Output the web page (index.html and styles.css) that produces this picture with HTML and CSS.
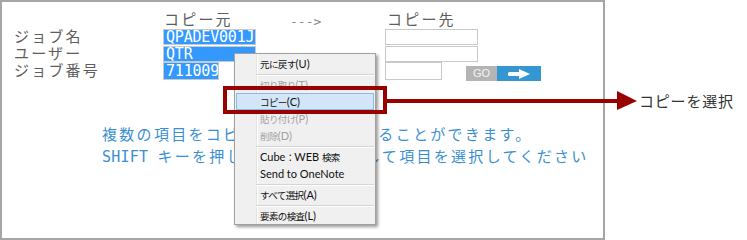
FILE: index.html
```html
<!DOCTYPE html>
<html lang="ja">
<head>
  <meta charset="UTF-8" />
  <title>ジョブのコピー</title>
  <link rel="stylesheet" href="styles.css">
</head>
<body>
<div class="page">
  <div class="screen">
    <div class="form">
      <span></span>
      <span class="head head-src">コピー元</span>
      <span class="head head-arrow">---&gt;</span>
      <span class="head head-dst">コピー先</span>
      <span></span>

      <span class="lbl">ジョブ名</span>
      <span><span class="field sel w10">QPADEV001J</span></span>
      <span></span>
      <span><span class="field w10"></span></span>
      <span></span>

      <span class="lbl">ユーザー</span>
      <span><span class="field sel w10">QTR</span></span>
      <span></span>
      <span><span class="field w10"></span></span>
      <span></span>

      <span class="lbl">ジョブ番号</span>
      <span><span class="field sel tall w6">711009</span></span>
      <span></span>
      <span><span class="field tall w6d"></span></span>
      <span class="go-btn">
        <span class="go-label">GO</span>
        <span class="go-arrow">
          <svg width="22" height="10" viewBox="0 0 22 10"><rect x="0" y="3" width="13" height="4" rx="1.5" fill="#fff"/><polygon points="11,0 22,5 11,10" fill="#fff"/></svg>
        </span>
      </span>
    </div>
    <p class="msg">
      複数の項目をコピーして一括登録することができます。<br>
      <span class="ascii">SHIFT </span>キーを押しながらクリックして項目を選択してください
    </p>
  </div>
  <div class="note">コピーを選択</div>
</div>

<!-- context menu -->
<div class="ctx-menu">
  <div class="item"><span class="jp">元に戻す</span>(U)</div>
  <div class="sep"></div>
  <div class="item off"><span class="jp">切り取り</span>(T)</div>
  <div class="item hot"><span class="jp">コピー</span>(C)</div>
  <div class="item off"><span class="jp">貼り付け</span>(P)</div>
  <div class="item off"><span class="jp">削除</span>(D)</div>
  <div class="sep"></div>
  <div class="item">Cube<span class="jp">：</span>WEB <span class="jp">検索</span></div>
  <div class="item">Send to OneNote</div>
  <div class="sep"></div>
  <div class="item"><span class="jp">すべて選択</span>(A)</div>
  <div class="sep"></div>
  <div class="item"><span class="jp">要素の検査</span>(L)</div>
</div>

<!-- callout -->
<div class="callout"></div>
<svg class="pointer" width="252" height="22" viewBox="0 0 252 22">
  <rect x="0" y="9" width="232" height="4" fill="#990000"/>
  <polygon points="230,1 250,11 230,20" fill="#990000"/>
</svg>
</body>
</html>
```

FILE: styles.css
```css
body {
  margin: 0;
  background-color: #fff;
  font-family: "DejaVu Sans Mono", "Noto Sans CJK JP", monospace;
}
.page {
  display: flex;
  align-items: flex-start;
}
.screen {
  box-sizing: border-box;
  width: 605px;
  height: 240px;
  border: 2px solid #a6a6a6;
  flex-shrink: 0;
}
.form {
  display: grid;
  grid-template-columns: 149px 127px 95px 81px 80px;
  grid-template-rows: 17px 17px 16px 18px;
  padding: 10px 0 0 12px;
  color: #5e5e5e;
  font-size: 15px;
}
.head, .lbl {
  line-height: 17px;
  letter-spacing: 2.2px;
  white-space: nowrap;
}
.lbl {
  align-self: center;
}
.head-src {
  padding-left: 1px;
}
.head-dst {
  padding-left: 2px;
}
.head-arrow {
  font-size: 13px;
  letter-spacing: 0;
  color: #8a8a8a;
  padding-top: 1px;
}
.field {
  display: block;
  box-sizing: border-box;
  height: 16px;
  border: 1px solid #c9c9c9;
  background-color: #fff;
  font-size: 15px;
  line-height: 14px;
  letter-spacing: -0.2px;
  padding-left: 2px;
  white-space: nowrap;
  overflow: hidden;
}
.field.sel {
  background-color: #3399ff;
  color: #fff;
}
.field.tall {
  height: 18px;
  line-height: 16px;
}
.w10 { width: 93px; }
.w6 { width: 56px; }
.w6d { width: 57px; }
.go-btn {
  display: flex;
  height: 15px;
  margin-top: 4px;
}
.go-label {
  width: 31px;
  background-color: #b4b4b4;
  color: #f4f4f4;
  font-family: "Liberation Sans", sans-serif;
  font-size: 11px;
  line-height: 15px;
  text-align: center;
}
.go-arrow {
  width: 44px;
  background-color: #3497d3;
  display: flex;
  align-items: center;
  justify-content: center;
}
.msg {
  margin: 44px 0 0 100px;
  color: #3a8fd2;
  font-size: 15px;
  line-height: 22px;
  letter-spacing: 2.3px;
  white-space: nowrap;
}
.msg .ascii {
  letter-spacing: 0.2px;
}
.note {
  padding: 92px 0 0 34px;
  font-family: "Noto Sans CJK JP", sans-serif;
  font-size: 15px;
  line-height: 18px;
  letter-spacing: 0.8px;
  color: #333;
  white-space: nowrap;
}
/* Context menu */
.ctx-menu {
  position: absolute;
  left: 234px;
  top: 53px;
  box-sizing: border-box;
  width: 142px;
  height: 172px;
  padding-top: 1px;
  border: 1px solid #a0a0a0;
  background: linear-gradient(to right, transparent 21px, #e2e3e3 21px, #e2e3e3 22px, #fff 22px, #fff 23px, transparent 23px), #f0f0f0;
  box-shadow: 2px 2px 3px rgba(0, 0, 0, 0.4);
  font-family: "Lato", "Noto Sans CJK JP", sans-serif;
  font-size: 11px;
  color: #111;
}
.item {
  box-sizing: border-box;
  height: 17px;
  line-height: 17px;
  margin: 0 1px;
  padding-left: 24px;
  white-space: nowrap;
}
.item .jp {
  font-size: 9.5px;
  letter-spacing: -0.6px;
}
.item.off {
  color: #a2a2a2;
}
.item.hot {
  background-color: #d3e6f8;
  border: 1px solid #86bbec;
  line-height: 15px;
  padding-left: 23px;
}
.sep {
  height: 1px;
  margin: 2px 1px 0 21px;
  background-color: #d5d5d5;
  border-bottom: 1px solid #fff;
}
/* Callout */
.callout {
  position: absolute;
  left: 223px;
  top: 86px;
  box-sizing: border-box;
  width: 164px;
  height: 28px;
  border: 4px solid #990000;
}
.pointer {
  position: absolute;
  left: 387px;
  top: 90px;
}
```
